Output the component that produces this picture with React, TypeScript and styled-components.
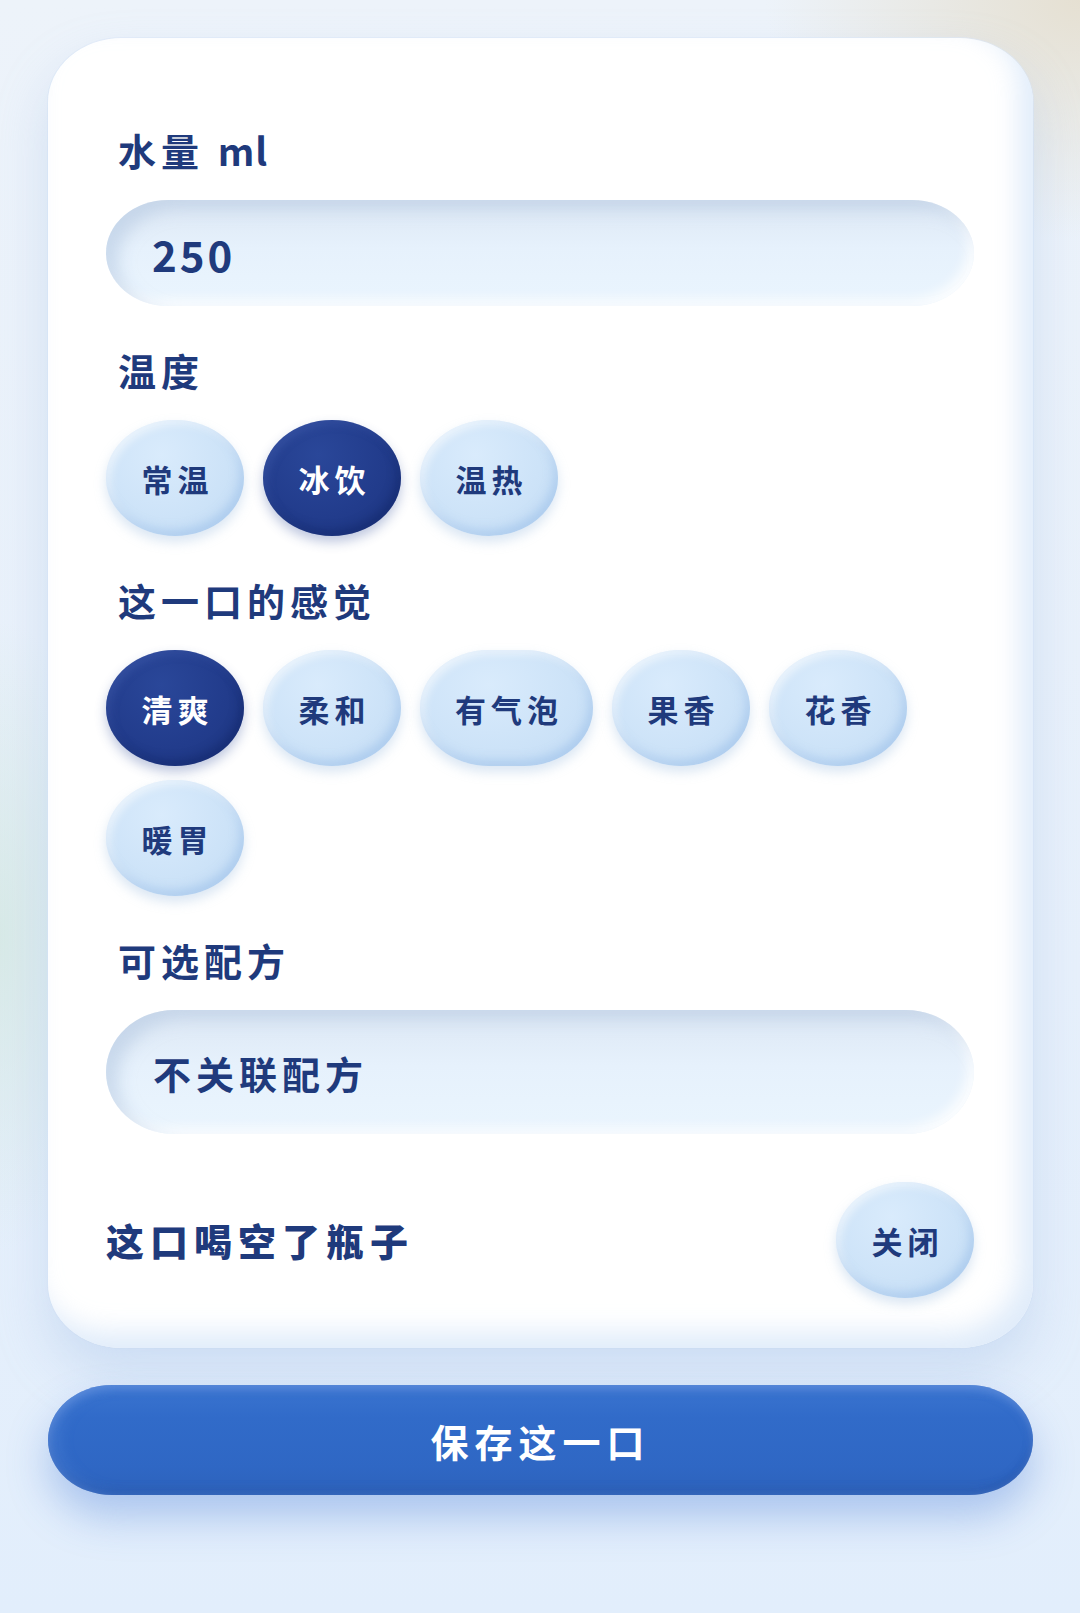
import React, { useState } from "react";
import styled, { createGlobalStyle } from "styled-components";

const temperatures = ["常温", "冰饮", "温热"];
const feelings = ["清爽", "柔和", "有气泡", "果香", "花香", "暖胃"];

const GlobalStyle = createGlobalStyle`
    html, body {
        margin: 0;
        padding: 0;
    }
    body {
        font-family: "Noto Sans CJK SC", "Noto Sans", sans-serif;
        color: #1f3a7c;
        background:
            radial-gradient(ellipse 420px 320px at 100% 0%, rgba(229, 223, 208, 0.95), rgba(229, 223, 208, 0) 75%),
            radial-gradient(ellipse 160px 420px at 0% 58%, rgba(212, 232, 226, 0.8), rgba(212, 232, 226, 0) 75%),
            linear-gradient(180deg, #edf3fa 0%, #e7f0fb 60%, #e2eefc 100%);
        min-height: 1613px;
    }
`;

export default function App() {
    const [temperature, setTemperature] = useState("冰饮");
    const [feeling, setFeeling] = useState("清爽");
    const [amount, setAmount] = useState("250");
    const [emptied, setEmptied] = useState(false);

    return (
        <>
            <GlobalStyle />
            <Page>
                <Card>
                    <Section>
                        <Label>
                            水量 <Unit>ml</Unit>
                        </Label>
                        <AmountInput value={amount} onChange={e => setAmount(e.target.value)} />
                    </Section>
                    <Section>
                        <Label>温度</Label>
                        <ChipRow>
                            {temperatures.map(t => (
                                <Chip key={t} $active={temperature === t} onClick={() => setTemperature(t)}>
                                    {t}
                                </Chip>
                            ))}
                        </ChipRow>
                    </Section>
                    <Section>
                        <Label>这一口的感觉</Label>
                        <ChipRow>
                            {feelings.map(f => (
                                <Chip key={f} $active={feeling === f} onClick={() => setFeeling(f)}>
                                    {f}
                                </Chip>
                            ))}
                        </ChipRow>
                    </Section>
                    <Section>
                        <Label>可选配方</Label>
                        <RecipeSelect>不关联配方</RecipeSelect>
                    </Section>
                    <ToggleRow>
                        <ToggleLabel>这口喝空了瓶子</ToggleLabel>
                        <Chip $active={emptied} onClick={() => setEmptied(!emptied)}>
                            {emptied ? "开启" : "关闭"}
                        </Chip>
                    </ToggleRow>
                </Card>
                <SaveButton>保存这一口</SaveButton>
            </Page>
        </>
    );
}

const Page = styled.main`
    display: flex;
    flex-direction: column;
    gap: 37px;
    padding: 38px 47px 100px 48px;
`;

const Card = styled.section`
    display: flex;
    flex-direction: column;
    gap: 42px;
    padding: 90px 59px 50px 58px;
    background: #ffffff;
    border-radius: 74px / 64px;
    box-shadow:
        0 26px 50px rgba(160, 190, 228, 0.35),
        0 0 0 1px rgba(222, 234, 248, 0.6),
        inset -14px -16px 26px rgba(214, 229, 248, 0.75);
`;

const Section = styled.div`
    display: flex;
    flex-direction: column;
    gap: 28px;
`;

const Label = styled.div`
    padding-left: 12px;
    font-size: 38px;
    line-height: 44px;
    font-weight: 700;
    letter-spacing: 5px;
    color: #1f3a7c;
`;

const Unit = styled.span`
    letter-spacing: 1px;
`;

const fieldSurface = `
    width: 100%;
    box-sizing: border-box;
    border: none;
    outline: none;
    font-family: "Noto Sans CJK SC", "Noto Sans", sans-serif;
    color: #1f3a7c;
    background: linear-gradient(180deg, #dce7f4 0%, #e6f1fc 45%, #eaf5fe 100%);
    box-shadow:
        inset 12px 9px 16px rgba(178, 198, 224, 0.55),
        inset -6px -6px 12px rgba(255, 255, 255, 0.85);
`;

const AmountInput = styled.input`
    ${fieldSurface}
    height: 106px;
    padding: 0 46px;
    border-radius: 62px / 53px;
    font-size: 42px;
    font-weight: 700;
    letter-spacing: 3px;
`;

const RecipeSelect = styled.div`
    ${fieldSurface}
    display: flex;
    align-items: center;
    height: 124px;
    padding: 0 46px 0 47px;
    border-radius: 68px / 62px;
    font-size: 38px;
    font-weight: 600;
    letter-spacing: 5px;
`;

const ChipRow = styled.div`
    display: flex;
    flex-wrap: wrap;
    gap: 14px 19px;
`;

const Chip = styled.button<{ $active?: boolean }>`
    display: inline-flex;
    align-items: center;
    justify-content: center;
    flex: none;
    min-width: 138px;
    height: 116px;
    padding: 0 30px 0 35px;
    box-sizing: border-box;
    border: none;
    border-radius: 69px / 58px;
    cursor: pointer;
    font-family: "Noto Sans CJK SC", "Noto Sans", sans-serif;
    font-size: 31px;
    font-weight: 700;
    letter-spacing: 5px;
    color: ${p => (p.$active ? "#ffffff" : "#1f3a7c")};
    background: ${p =>
        p.$active
            ? "radial-gradient(ellipse at 40% 30%, #2a4799 0%, #223c8c 55%, #1d3580 100%)"
            : "radial-gradient(ellipse at 40% 30%, #d9ebfc 0%, #cde3f8 55%, #c3dcf5 100%)"};
    box-shadow: ${p =>
        p.$active
            ? "0 6px 12px rgba(40, 70, 150, 0.3), inset -4px -6px 10px rgba(15, 35, 100, 0.45), inset 4px 4px 8px rgba(80, 110, 190, 0.35)"
            : "0 6px 12px rgba(150, 182, 222, 0.35), inset -4px -6px 10px rgba(150, 188, 232, 0.5), inset 4px 4px 8px rgba(255, 255, 255, 0.6)"};
`;

const ToggleRow = styled.div`
    display: flex;
    align-items: center;
    justify-content: space-between;
    margin-top: 6px;
`;

const ToggleLabel = styled.div`
    font-size: 38px;
    line-height: 44px;
    font-weight: 900;
    letter-spacing: 6px;
    color: #1f3a7c;
`;

const SaveButton = styled.button`
    height: 110px;
    border: none;
    border-radius: 64px / 55px;
    cursor: pointer;
    font-family: "Noto Sans CJK SC", "Noto Sans", sans-serif;
    font-size: 38px;
    font-weight: 700;
    letter-spacing: 6px;
    padding-left: 6px;
    color: #ffffff;
    background: linear-gradient(180deg, #3a74d0 0%, #316bc9 30%, #2f67c4 75%, #2d62bb 100%);
    box-shadow:
        0 22px 40px rgba(80, 130, 215, 0.38),
        inset 0 4px 8px rgba(120, 160, 230, 0.5),
        inset 10px 0 14px rgba(90, 140, 220, 0.4),
        inset 0 -5px 8px rgba(30, 70, 150, 0.35);
`;
